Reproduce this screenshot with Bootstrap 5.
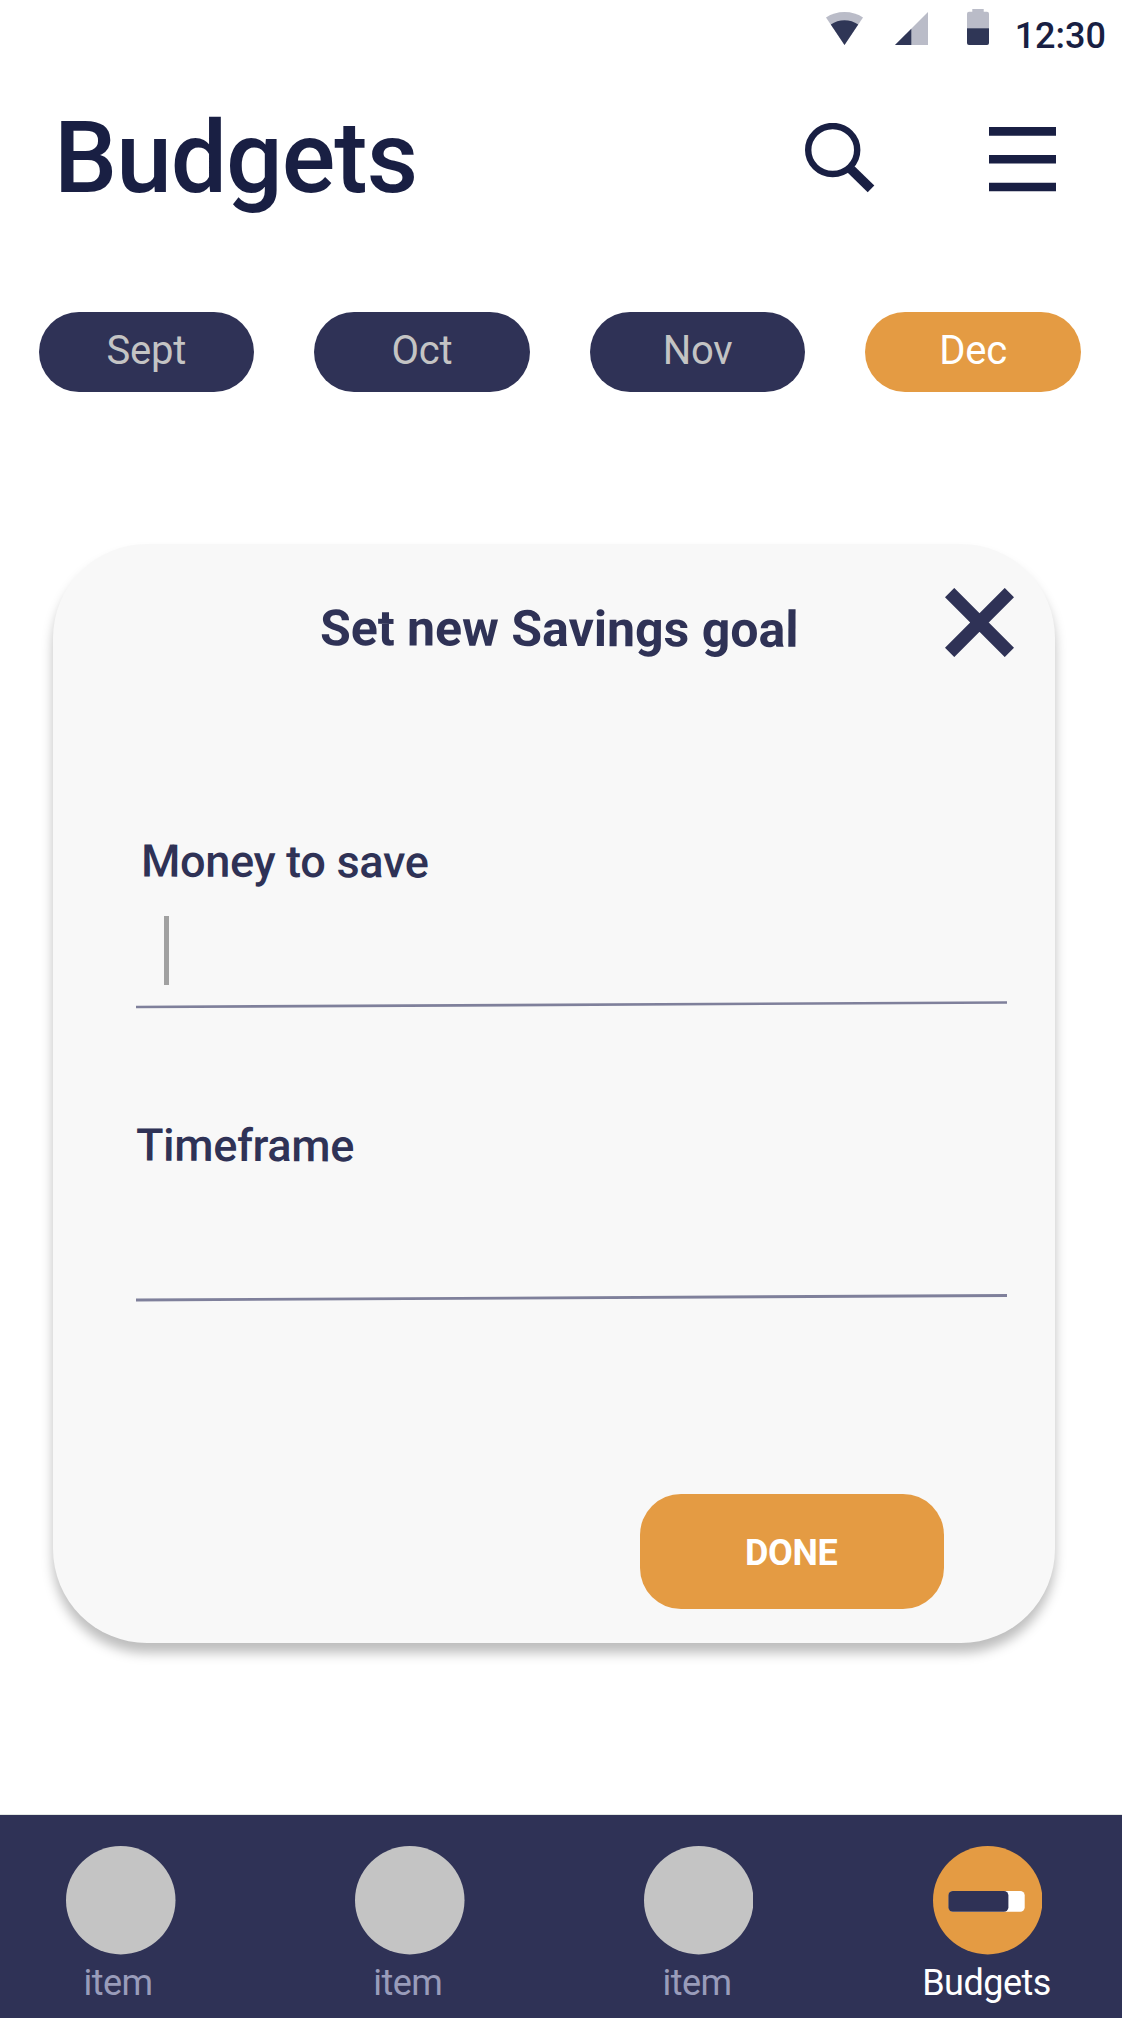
<!DOCTYPE html>
<html lang="en">
<head>
<meta charset="utf-8">
<meta name="viewport" content="width=device-width, initial-scale=1">
<title>Budgets</title>
<link href="https://cdn.jsdelivr.net/npm/bootstrap@5.3.0/dist/css/bootstrap.min.css" rel="stylesheet">
<style>
  :root { --navy: #2f3256; --ink: #191f43; --amber: #e49b43; --silver: #c4c4c4; }
  body { font-family: Roboto, "Liberation Sans", sans-serif; line-height: 1; color: var(--ink); }
  svg { display: block; flex: none; }
  .screen { width: 1122px; height: 2018px; overflow: hidden; }
  .status-bar { height: 60px; padding: 9px 16px 0 0; }
  .clock { font-size: 36px; font-weight: 500; margin: 8.5px 0 0 26px; }
  .signal-icon { margin: 3px 39px 0 32px; }
  .wifi-icon { margin-top: 3px; }
  .top-bar { height: 251.5px; padding: 48px 66px 0 54px; }
  .page-title { font-size: 100px; font-weight: 500; line-height: 1; letter-spacing: -1px; }
  .search-btn { margin: 15px 114px 0 0; }
  .menu-btn { margin-top: 19px; }
  .months { padding: 0 41px 0 38.5px; height: 232.5px; }
  .month { width: 215.6px; height: 80.5px; border-radius: 40px; background: var(--navy); color: var(--silver);
           font-size: 40px; line-height: 1; padding: 0 0 2px; border: 0; font-weight: 400; letter-spacing: -.2px; }
  .month.current { background: var(--amber); color: #fff; }
  .goal-card { margin: 0 67px 0 53px; height: 1099px; border-radius: 94px; background: #f8f8f8;
               box-shadow: 0 10px 12px rgba(0,0,0,.26); padding: 0 48px 0 83px; color: var(--navy); }
  .goal-head { height: 294.5px; padding: 44px 0 0 184.3px; margin-right: -7px; }
  .goal-title { font-size: 50px; font-weight: 700; line-height: 1; margin-top: 16px; transform: rotate(.2deg); white-space: nowrap; }
  .field-label { font-size: 45px; font-weight: 500; line-height: 1; align-self: flex-start; transform: rotate(.2deg); letter-spacing: -.3px; }
  .money { height: 284.5px; }
  .timeframe { height: 371.5px; }
  .money .field-label { margin-left: 4.7px; }
  .caret { width: 5.5px; height: 69.5px; background: #a1a1a1; margin: 32.3px 0 15.7px 27.5px; }
  .timeframe-line { margin-top: 126px; }
  .done-btn { width: 304.5px; height: 115px; border-radius: 41px; background: var(--amber); color: #fff; border: 0;
              font-size: 36px; font-weight: 700; line-height: 1; margin: -.5px 63px 0 0; padding: 3px 1px 0 0; letter-spacing: -.3px; }
  .tab-bar { margin-top: 171px; height: 204px; background: var(--navy); border-top: 1px solid #e3e8e5; padding: 31px 80px 0 66.3px; }
  .tab { width: 109.5px; color: #999cba; font-size: 36px; letter-spacing: -.5px; }
  .tab.current { color: #fff; letter-spacing: -.5px; }
  .tab-label { margin-top: 10px; white-space: nowrap; }
  .tab:nth-child(1) .tab-label { margin-left: -6px; }
  .tab:nth-child(2) .tab-label { margin-left: -4px; }
  .tab:nth-child(3) .tab-label { margin-left: -3px; }
  .tab:nth-child(4) .tab-label { margin-left: -1.5px; }
</style>
</head>
<body>
<div class="screen d-flex flex-column bg-white">
  <div class="status-bar d-flex justify-content-end align-items-start">
    <svg class="wifi-icon" width="37" height="33" viewBox="0 0 37 33"><path fill="#babcc8" d="M0 5.5Q8 0 18.500 0T37 5.500L18.500 33z"/><path fill="#2f3656" d="M4.800 12.500Q11 8.200 18.500 8.200T32.200 12.500L18.500 33z"/></svg>
    <svg class="signal-icon" width="33" height="33" viewBox="0 0 33 33"><path fill="#babcc8" d="M33 0v33H0z"/><path fill="#2f3656" d="M16.300 16.700V33H0z"/></svg>
    <svg width="22" height="36" viewBox="0 0 22 36"><path fill="#babcc8" d="M5.300 0h11.400v2.700H20a2 2 0 0 1 2 2V19.500H0V4.700a2 2 0 0 1 2-2h3.300z"/><path fill="#2f3656" d="M0 19.200h22V34a2 2 0 0 1-2 2H2a2 2 0 0 1-2-2z"/></svg>
    <div class="clock">12:30</div>
  </div>

  <header class="top-bar d-flex align-items-start">
    <h1 class="page-title mb-0 me-auto">Budgets</h1>
    <button class="search-btn btn p-0 border-0" aria-label="Search"><svg width="70" height="70" viewBox="0 0 70 70"><ellipse cx="27.700" cy="27" rx="24.500" ry="24" fill="none" stroke="#191f43" stroke-width="6.400"/><path fill="#191f43" d="M49.500 43.200L69.300 62.500L62.700 69.200L42.500 49.500z"/></svg></button>
    <button class="menu-btn btn p-0 border-0" aria-label="Menu"><svg width="67" height="65" viewBox="0 0 67 65"><path fill="#191f43" d="M0 0h67v8.700H0zM0 28h67v8.500H0zM0 55.700h67v8.500H0z"/></svg></button>
  </header>

  <div class="months d-flex justify-content-between align-items-start">
    <button class="month">Sept</button>
    <button class="month">Oct</button>
    <button class="month">Nov</button>
    <button class="month current">Dec</button>
  </div>

  <section class="goal-card d-flex flex-column">
    <div class="goal-head d-flex justify-content-between align-items-start">
      <h2 class="goal-title mb-0">Set new Savings goal</h2>
      <button class="btn p-0 border-0" aria-label="Close"><svg width="69" height="69" viewBox="0 0 69 69"><path d="M4.600 4.600L64.400 64.400M64.400 4.600L4.600 64.400" stroke="#2f3256" stroke-width="13.200"/></svg></button>
    </div>
    <div class="money d-flex flex-column">
      <label class="field-label">Money to save</label>
      <div class="caret"></div>
      <svg width="871" height="8" viewBox="0 0 871 8"><path d="M0 6L871 1.500" stroke="#7f809b" stroke-width="2.700"/></svg>
    </div>
    <div class="timeframe d-flex flex-column">
      <label class="field-label">Timeframe</label>
      <svg class="timeframe-line" width="871" height="8" viewBox="0 0 871 8"><path d="M0 6L871 1.500" stroke="#7f809b" stroke-width="2.800"/></svg>
    </div>
    <button class="done-btn align-self-end">DONE</button>
  </section>

  <nav class="tab-bar d-flex justify-content-between">
    <div class="tab d-flex flex-column align-items-center"><svg width="109.500" height="108.500" viewBox="0 0 109.500 108.500"><ellipse cx="54.750" cy="54.250" rx="54.750" ry="54.250" fill="#c4c4c4"/></svg><span class="tab-label">item</span></div>
    <div class="tab d-flex flex-column align-items-center"><svg width="109.500" height="108.500" viewBox="0 0 109.500 108.500"><ellipse cx="54.750" cy="54.250" rx="54.750" ry="54.250" fill="#c4c4c4"/></svg><span class="tab-label">item</span></div>
    <div class="tab d-flex flex-column align-items-center"><svg width="109.500" height="108.500" viewBox="0 0 109.500 108.500"><ellipse cx="54.750" cy="54.250" rx="54.750" ry="54.250" fill="#c4c4c4"/></svg><span class="tab-label">item</span></div>
    <div class="tab current d-flex flex-column align-items-center"><svg width="109.500" height="108.500" viewBox="0 0 109.500 108.500"><ellipse cx="54.750" cy="54.250" rx="54.750" ry="54.250" fill="#e49b43"/><rect x="15.700" y="45" width="76" height="20.700" rx="4.500" fill="#fff"/><rect x="15.400" y="45" width="60" height="20.700" rx="4.500" fill="#2f3256"/></svg><span class="tab-label">Budgets</span></div>
  </nav>
</div>
<script src="https://cdn.jsdelivr.net/npm/bootstrap@5.3.0/dist/js/bootstrap.bundle.min.js"></script>
</body>
</html>
